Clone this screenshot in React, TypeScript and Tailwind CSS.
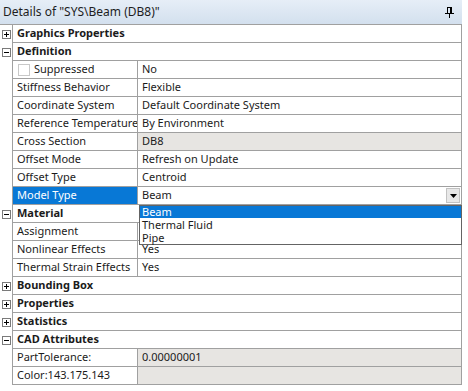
import React from 'react';

type Row =
  | { kind: 'group'; label: string; open: boolean }
  | { kind: 'prop'; label: string; value: string; grayValue?: boolean; check?: boolean; selected?: boolean; combo?: boolean };

const rows: Row[] = [
  { kind: 'group', label: 'Graphics Properties', open: false },
  { kind: 'group', label: 'Definition', open: true },
  { kind: 'prop', label: 'Suppressed', value: 'No', check: true },
  { kind: 'prop', label: 'Stiffness Behavior', value: 'Flexible' },
  { kind: 'prop', label: 'Coordinate System', value: 'Default Coordinate System' },
  { kind: 'prop', label: 'Reference Temperature', value: 'By Environment' },
  { kind: 'prop', label: 'Cross Section', value: 'DB8', grayValue: true },
  { kind: 'prop', label: 'Offset Mode', value: 'Refresh on Update' },
  { kind: 'prop', label: 'Offset Type', value: 'Centroid' },
  { kind: 'prop', label: 'Model Type', value: 'Beam', selected: true, combo: true },
  { kind: 'group', label: 'Material', open: true },
  { kind: 'prop', label: 'Assignment', value: '' },
  { kind: 'prop', label: 'Nonlinear Effects', value: 'Yes' },
  { kind: 'prop', label: 'Thermal Strain Effects', value: 'Yes' },
  { kind: 'group', label: 'Bounding Box', open: false },
  { kind: 'group', label: 'Properties', open: false },
  { kind: 'group', label: 'Statistics', open: false },
  { kind: 'group', label: 'CAD Attributes', open: true },
  { kind: 'prop', label: 'PartTolerance:', value: '0.00000001', grayValue: true },
  { kind: 'prop', label: 'Color:143.175.143', value: '', grayValue: true },
];

// little +/- box in the left gutter
const Expander = ({ open }: { open: boolean }) => (
  <div className="w-[9px] h-[9px] border border-[#7a7a7a] bg-white relative">
    <div className="absolute left-[1px] top-[3px] w-[5px] h-[1px] bg-black" />
    {!open && <div className="absolute left-[3px] top-[1px] w-[1px] h-[5px] bg-black" />}
  </div>
);

const App: React.FC = () => {
  return (
    <div className="w-[468px] h-[391px] bg-white relative overflow-hidden text-[11px] text-[#1b1b1b] whitespace-nowrap" style={{ fontFamily: '"Noto Sans", "Open Sans", sans-serif' }}>
      {/* Title bar */}
      <div className="h-[25px] border-b border-[#a0a0a0] bg-gradient-to-b from-[#e6eef7] to-[#d3e0ee] flex items-center justify-between pl-[3px] pr-[8px] w-[462px]">
        <span className="text-[12px] text-[#1e1e1e]">Details of "SYS\Beam (DB8)"</span>
        <svg width="9" height="11" viewBox="0 0 9 11">
          <rect x="2" y="0" width="5" height="1" fill="#000" />
          <rect x="2" y="1" width="1" height="5" fill="#000" />
          <rect x="5" y="1" width="2" height="5" fill="#000" />
          <rect x="0" y="6" width="9" height="1" fill="#000" />
          <rect x="4" y="7" width="1" height="4" fill="#000" />
        </svg>
      </div>

      {/* Property grid */}
      <div className="flex flex-col">
        {rows.map((r) => (
          <div key={r.label} className="flex h-[18px]">
            <div className="w-[12px] flex items-center justify-center">
              {r.kind === 'group' && <Expander open={r.open} />}
            </div>
            <div className="w-[450px] flex border-l border-r border-b border-[#a0a0a0]">
              {r.kind === 'group' ? (
                <div className="flex items-center pl-[4px] font-bold">{r.label}</div>
              ) : (
                <>
                  <div
                    className={`w-[125px] flex items-center overflow-hidden border-r border-[#a0a0a0] ${
                      r.selected ? 'bg-[#0878d6] text-white' : ''
                    } ${r.check ? 'pl-[5px]' : 'pl-[4px]'}`}
                  >
                    {r.check && <div className="w-[12px] h-[12px] border border-[#c8c8c8] bg-white mr-[4px]" />}
                    {r.label}
                  </div>
                  <div
                    className={`flex-1 flex items-center justify-between pl-[4px] ${r.grayValue ? 'bg-[#e7e5e2]' : ''} ${
                      r.combo ? 'pr-[1px]' : ''
                    }`}
                  >
                    <span>{r.value}</span>
                    {r.combo && (
                      <div className="w-[14px] h-[15px] bg-[#e8e8e8] border border-[#c2c2c2] flex items-center justify-center">
                        <svg width="7" height="4" viewBox="0 0 7 4">
                          <path d="M0 0h7L3.5 4z" fill="#000" />
                        </svg>
                      </div>
                    )}
                  </div>
                </>
              )}
            </div>
          </div>
        ))}
      </div>

      {/* Open drop-down list for Model Type */}
      <div className="absolute left-[139px] top-[205px] w-[323px] h-[40px] border border-[#646464] bg-white leading-[13px]">
        <div className="bg-[#0878d6] text-white pl-[2px] h-[12px] leading-[12px]">Beam</div>
        <div className="pl-[2px] h-[13px]">Thermal Fluid</div>
        <div className="pl-[2px] h-[13px]">Pipe</div>
      </div>
    </div>
  );
};

export default App;
